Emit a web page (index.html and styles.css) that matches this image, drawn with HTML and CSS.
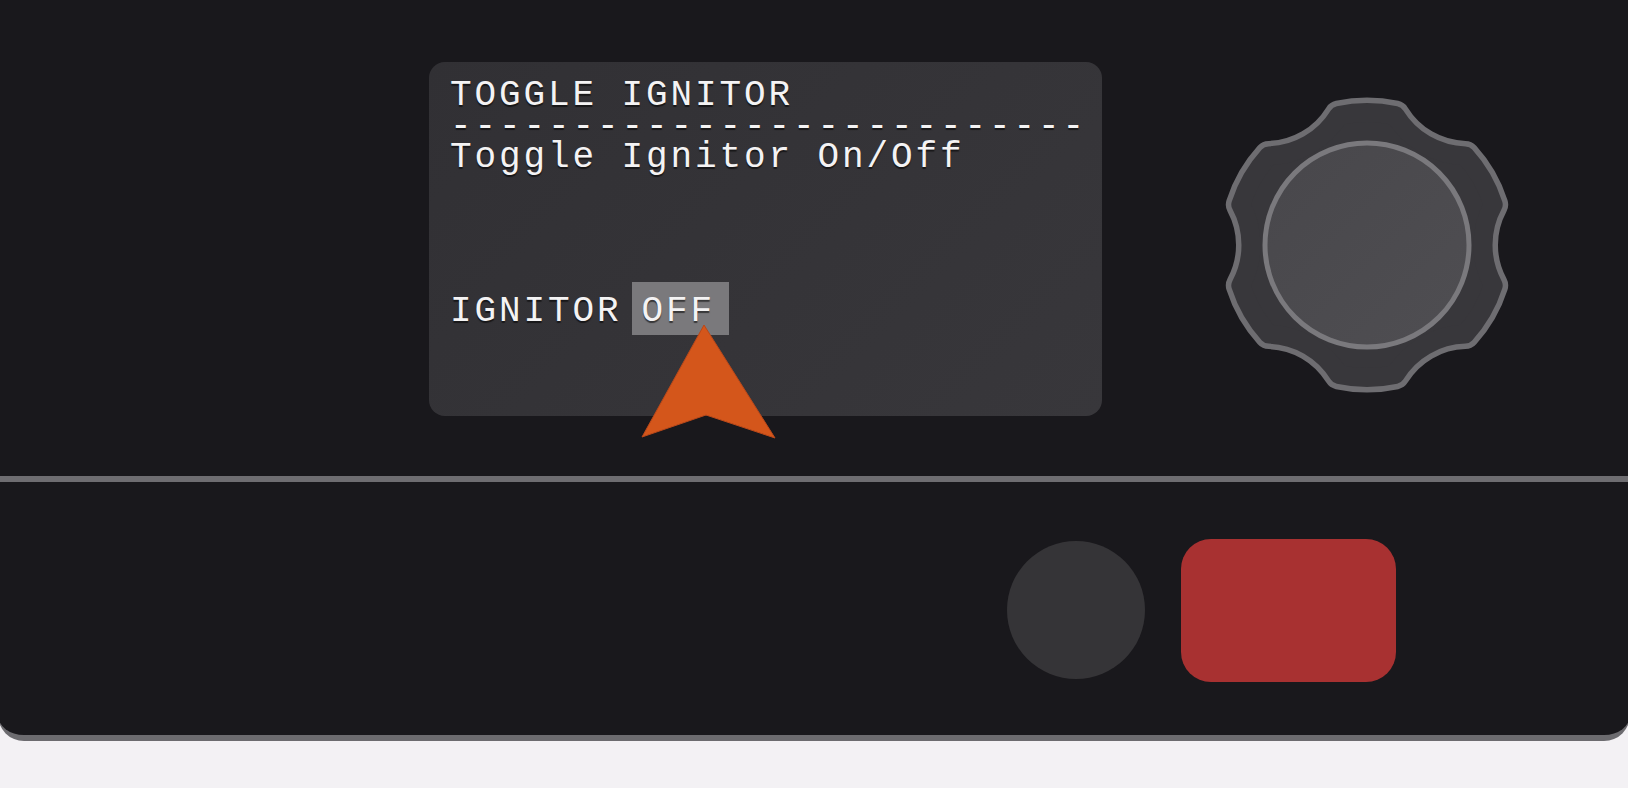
FILE: index.html
```html
<!DOCTYPE html>
<html lang="en">
<head>
    <meta charset="UTF-8">
    <meta name="viewport" content="width=device-width, initial-scale=1.0">
    <title>Ignitor Control</title>
    <link rel="stylesheet" href="styles.css">
</head>
<body>
    <div class="device">
        <section class="upper">
            <div class="screen">
                <div class="display">
                    <div class="line">TOGGLE IGNITOR</div>
                    <div class="line">--------------------------</div>
                    <div class="line">Toggle Ignitor On/Off</div>
                    <div class="blank"></div>
                    <div class="line"><span>IGNITOR</span><span class="value">OFF</span></div>
                </div>
                <svg class="pointer" width="140" height="122" viewBox="0 0 140 122">
                    <polygon points="65,5 3,117 67,95 136,118" fill="#d4561b" stroke="#b9481a" stroke-width="1" stroke-linejoin="round"/>
                </svg>
            </div>
            <div class="knob">
                <svg width="300" height="300" viewBox="-150 -150 300 300">
                    <defs>
                        <linearGradient id="knob-cap" x1="0" y1="0" x2="1" y2="1">
                            <stop offset="0" stop-color="#48474b"/>
                            <stop offset="1" stop-color="#4f4e52"/>
                        </linearGradient>
                    </defs>
                    <!-- gear outline: thick round-joined strokes give the soft lobe corners -->
                    <path d="M126.2,-40.4 A85,85 0 0 0 126.2,40.4 A132.5,132.5 0 0 1 98.1,89.1 A85,85 0 0 0 28.1,129.5 A132.5,132.5 0 0 1 -28.1,129.5 A85,85 0 0 0 -98.1,89.1 A132.5,132.5 0 0 1 -126.2,40.4 A85,85 0 0 0 -126.2,-40.4 A132.5,132.5 0 0 1 -98.1,-89.1 A85,85 0 0 0 -28.1,-129.5 A132.5,132.5 0 0 1 28.1,-129.5 A85,85 0 0 0 98.1,-89.1 A132.5,132.5 0 0 1 126.2,-40.4 Z" fill="#6e6d71" stroke="#6e6d71" stroke-width="30" stroke-linejoin="round"/>
                    <path d="M126.2,-40.4 A85,85 0 0 0 126.2,40.4 A132.5,132.5 0 0 1 98.1,89.1 A85,85 0 0 0 28.1,129.5 A132.5,132.5 0 0 1 -28.1,129.5 A85,85 0 0 0 -98.1,89.1 A132.5,132.5 0 0 1 -126.2,40.4 A85,85 0 0 0 -126.2,-40.4 A132.5,132.5 0 0 1 -98.1,-89.1 A85,85 0 0 0 -28.1,-129.5 A132.5,132.5 0 0 1 28.1,-129.5 A85,85 0 0 0 98.1,-89.1 A132.5,132.5 0 0 1 126.2,-40.4 Z" fill="#38373b" stroke="#38373b" stroke-width="19" stroke-linejoin="round"/>
                    <circle cx="0" cy="0" r="102" fill="url(#knob-cap)" stroke="#7a797d" stroke-width="5"/>
                </svg>
            </div>
        </section>
        <section class="lower">
            <span class="btn-round"></span>
            <span class="btn-stop"></span>
        </section>
    </div>
</body>
</html>
```

FILE: styles.css
```css
:root {
    --panel: #19181c;
    --edge: #6c6b6f;
    --text: #f4f3f4;
}
body { margin: 0; background-color: #f3f1f4; overflow: hidden; }
.device {
    background-color: var(--panel);
    margin: 0 -2px;
    border-bottom: 6px solid var(--edge);
    border-radius: 0 0 26px 26px;
}
.upper {
    display: flex;
    align-items: flex-start;
    height: 414px;
    padding: 62px 0 0 431px;
    border-bottom: 6px solid #6e6d71;
}
.screen {
    position: relative;
    width: 673px;
    height: 354px;
    box-sizing: border-box;
    padding: 19px 20px 0 21px;
    border-radius: 16px;
    background: linear-gradient(135deg, #313034, #38373b);
}
.display {
    font-family: "Liberation Mono", "DejaVu Sans Mono", monospace;
    font-size: 36px;
    letter-spacing: 2.9px;
    line-height: 30.8px;
    color: var(--text);
    text-shadow: 0 2px 1px rgba(0,0,0,0.55);
}
.line { height: 30.8px; white-space: pre; }
.blank { height: 123.2px; }
.value {
    margin-left: 10px;
    padding: 9px 14px 3px 10px;
    background-color: #7a797c;
}
.pointer { position: absolute; left: 210px; top: 258px; }
.knob { margin: 33px 0 0 115px; }
.knob svg { display: block; }
.lower {
    display: flex;
    align-items: center;
    height: 250px;
    padding: 3px 0 0 1009px;
    gap: 36px;
}
.btn-round { width: 138px; height: 138px; border-radius: 50%; background-color: #353437; }
.btn-stop { width: 215px; height: 143px; border-radius: 30px; background-color: #a83131; }
```
